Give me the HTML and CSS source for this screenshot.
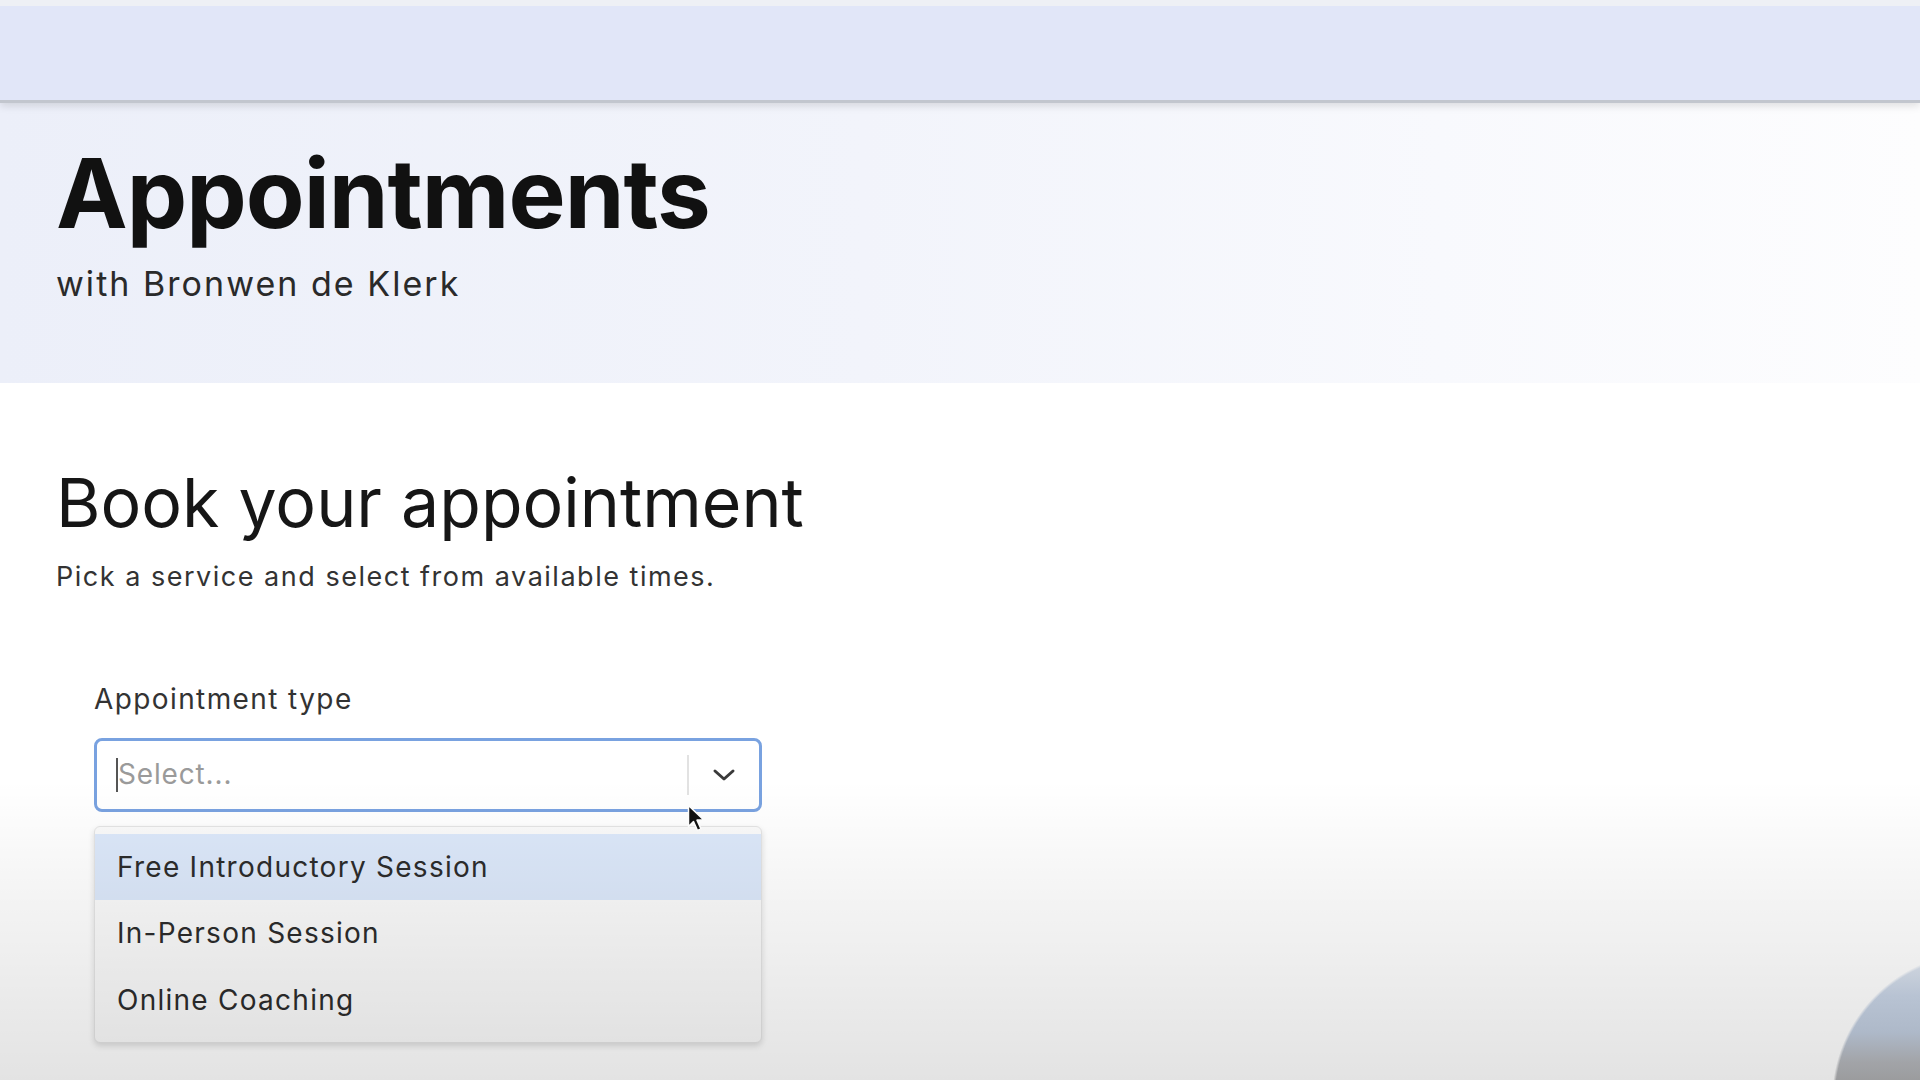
FILE: index.html
```html
<!DOCTYPE html>
<html lang="en">
<head>
    <meta charset="UTF-8">
    <meta name="viewport" content="width=device-width, initial-scale=1.0">
    <title>Appointments</title>
    <link rel="stylesheet" href="styles.css">
</head>
<body>
    <header class="topbar"></header>

    <section class="hero">
        <h1>Appointments</h1>
        <p class="host">with Bronwen de Klerk</p>
    </section>

    <main class="booking">
        <h2>Book your appointment</h2>
        <p class="lead">Pick a service and select from available times.</p>

        <div class="field">
            <label class="field-label" for="type">Appointment type</label>
            <div class="select" id="type">
                <span class="caret"></span>
                <span class="placeholder">Select...</span>
                <span class="divider"></span>
                <span class="chevron">
                    <svg width="24" height="14" viewBox="0 0 24 14">
                        <path d="M3 3l9 8 9-8" fill="none" stroke="#3a3a3a" stroke-width="3" stroke-linecap="round" stroke-linejoin="round"/>
                    </svg>
                </span>
                <svg class="pointer" width="18" height="28" viewBox="0 0 18 28">
                    <path d="M1.5 1.5v21l5-5 4 9 3.5-1.6-4-8.8h7z" fill="#111" stroke="#fff" stroke-width="1.5" stroke-linejoin="round"/>
                </svg>
            </div>

            <ul class="menu">
                <li class="option active">Free Introductory Session</li>
                <li class="option">In-Person Session</li>
                <li class="option">Online Coaching</li>
            </ul>
        </div>
    </main>

    <!-- dimmed edge of the recording + webcam bubble -->
    <div class="fade"></div>
    <div class="webcam"></div>
</body>
</html>
```

FILE: styles.css
```css
body {
    margin: 0;
    font-family: 'Inter', 'Noto Sans', sans-serif;
    color: #1f1f1f;
    background-color: #fff;
    height: 100vh;
    overflow: hidden;
    position: relative;
}

.topbar {
    height: 94px;
    border-top: 6px solid #eef0f5;
    border-bottom: 3px solid #c2c6ce;
    background-color: #e1e6f8;
    box-shadow: 0 3px 8px rgba(0, 0, 0, 0.12);
    position: relative;
    z-index: 1;
}

.hero {
    height: 238px;
    padding: 42px 56px 0;
    background: linear-gradient(to right, #eceff9 0%, #f2f4fb 45%, #f8f9fd 75%, #fdfdfe 100%);
}

.hero h1 {
    margin: 0;
    font-size: 96px;
    line-height: 1;
    font-weight: 700;
    letter-spacing: -0.01em;
    color: #111;
}

.host {
    margin: 23px 0 0;
    font-size: 34px;
    line-height: 1.2;
    letter-spacing: 0.06em;
    color: #2a2a2a;
}

.booking {
    padding: 85px 56px 0;
}

.booking h2 {
    margin: 0;
    font-size: 68px;
    line-height: 1;
    font-weight: 400;
    color: #161616;
}

.lead {
    margin: 25px 0 0;
    font-size: 27px;
    line-height: 1.2;
    letter-spacing: 0.056em;
    color: #333;
}

.field {
    width: 668px;
    margin: 90px 0 0 38px;
}

.field-label {
    display: block;
    font-size: 28px;
    line-height: 1.2;
    letter-spacing: 0.05em;
    color: #333;
    margin-bottom: 21px;
}

.select {
    position: relative;
    height: 68px;
    display: flex;
    align-items: center;
    padding: 0 0 0 19px;
    border: 3px solid #79a2e0;
    border-radius: 8px;
    background-color: #fff;
}

.caret {
    width: 2px;
    height: 34px;
    background-color: #555;
}

.placeholder {
    flex: 1;
    font-size: 28px;
    line-height: 1.2;
    letter-spacing: 0.03em;
    color: #9a9a9a;
}

.divider {
    width: 2px;
    height: 40px;
    background-color: #e2e2e2;
}

.chevron {
    width: 70px;
    display: flex;
    justify-content: center;
}

.chevron svg {
    display: block;
}

.pointer {
    position: absolute;
    left: 590px;
    top: 63px;
}

.menu {
    list-style: none;
    margin: 14px 0 0;
    padding: 7px 0 9px;
    background-color: #fafafa;
    border: 1px solid #e4e4e4;
    border-radius: 6px;
    box-shadow: 0 3px 6px rgba(0, 0, 0, 0.14);
}

.option {
    height: 66.5px;
    line-height: 66.5px;
    padding: 0 22px;
    font-size: 28px;
    letter-spacing: 0.045em;
    color: #2c2c2c;
}

.option.active {
    background-color: #dce8fa;
}

.fade {
    position: absolute;
    left: 0;
    right: 0;
    top: 780px;
    bottom: 0;
    background: linear-gradient(to bottom, rgba(0, 0, 0, 0) 0%, rgba(0, 0, 0, 0.05) 45%, rgba(0, 0, 0, 0.11) 100%);
    pointer-events: none;
}

.webcam {
    position: absolute;
    right: 0;
    bottom: 0;
    width: 90px;
    height: 120px;
    background: linear-gradient(to bottom, #d0d6df 0%, #b8c3d3 30%, #aeb9c9 60%, #a2a4a8 85%, #9b9c9e 100%);
    -webkit-mask: radial-gradient(circle at 150px 140px, #000 145px, transparent 148px);
    mask: radial-gradient(circle at 150px 140px, #000 145px, transparent 148px);
}
```
